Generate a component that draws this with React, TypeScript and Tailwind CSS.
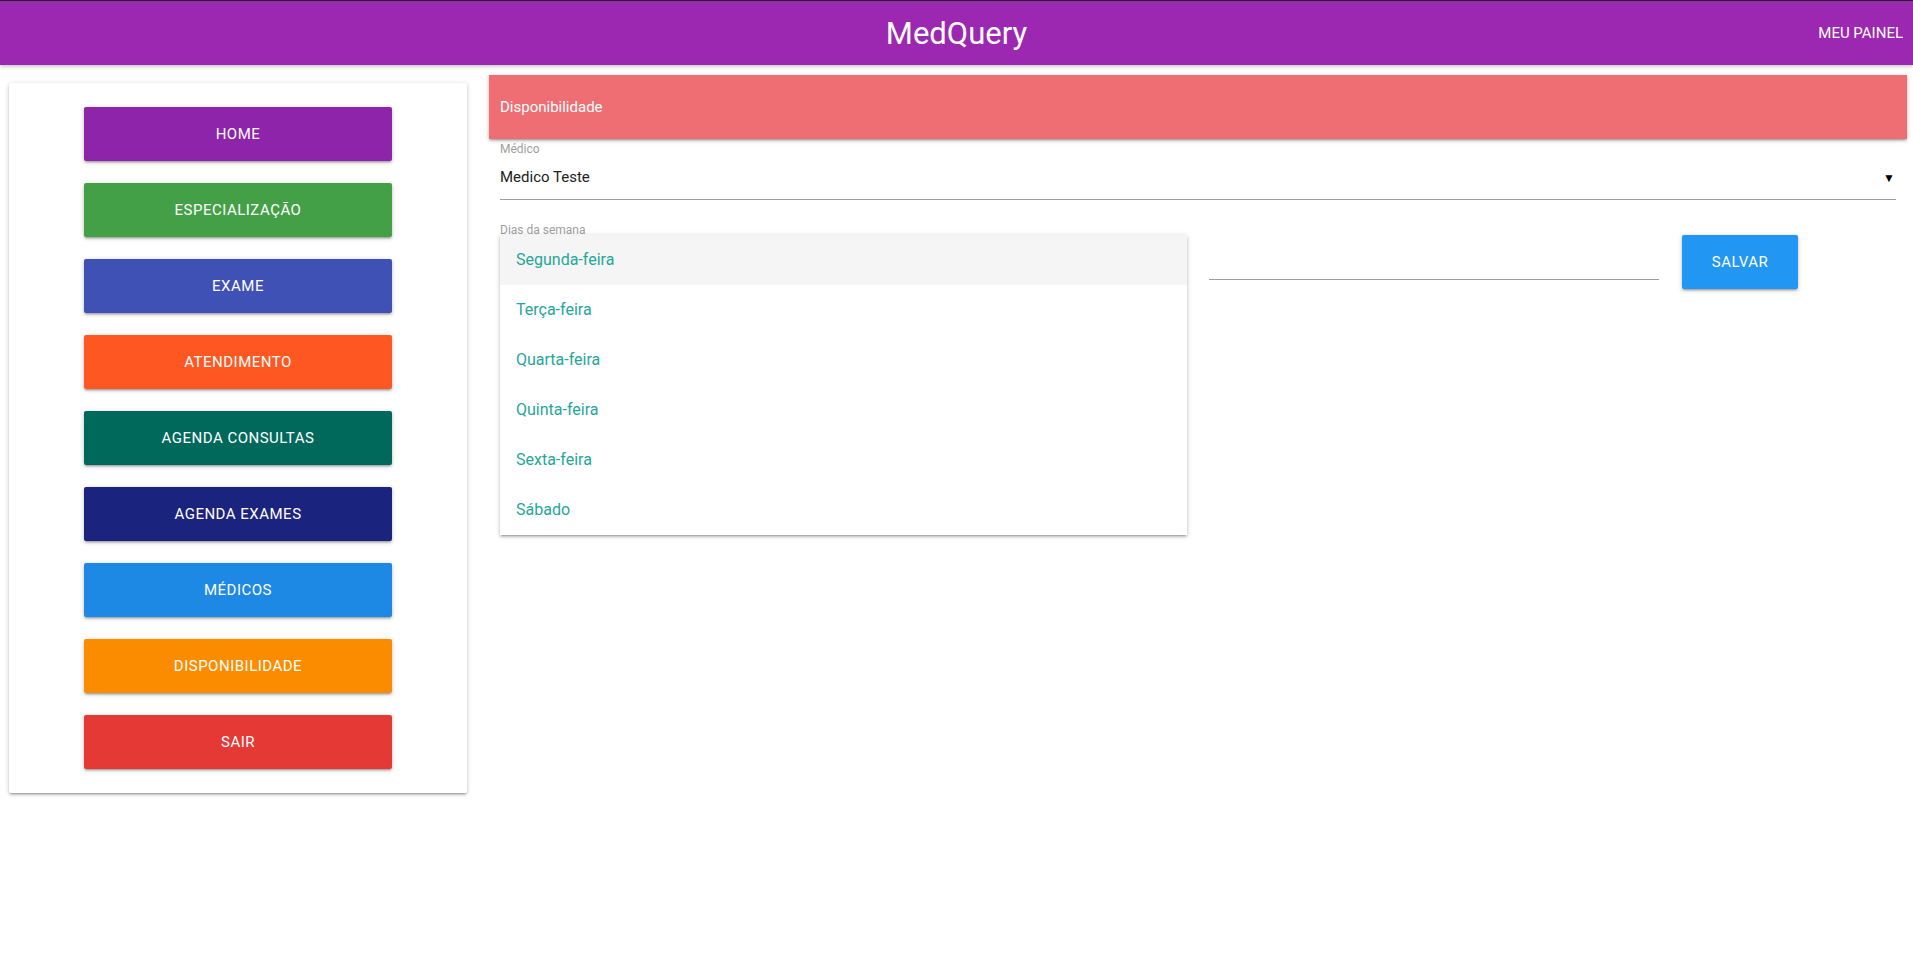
import { useState } from "react";

const shadow = "shadow-[0_2px_2px_0_rgba(0,0,0,0.14),0_3px_1px_-2px_rgba(0,0,0,0.12),0_1px_5px_0_rgba(0,0,0,0.2)]";

const menu = [
  { label: "HOME", color: "bg-[#8e24aa]" },
  { label: "ESPECIALIZAÇÃO", color: "bg-[#43a047]" },
  { label: "EXAME", color: "bg-[#3f51b5]" },
  { label: "ATENDIMENTO", color: "bg-[#ff5722]" },
  { label: "AGENDA CONSULTAS", color: "bg-[#00695c]" },
  { label: "AGENDA EXAMES", color: "bg-[#1a237e]" },
  { label: "MÉDICOS", color: "bg-[#1e88e5]" },
  { label: "DISPONIBILIDADE", color: "bg-[#fb8c00]" },
  { label: "SAIR", color: "bg-[#e53935]" },
];

const dias = ["Segunda-feira", "Terça-feira", "Quarta-feira", "Quinta-feira", "Sexta-feira", "Sábado"];

function Sidebar() {
  return (
    <aside className={`ml-[9px] mt-[18px] flex h-fit w-[458px] shrink-0 flex-col items-center gap-[22px] rounded-[2px] bg-white py-[24px] ${shadow}`}>
      {menu.map((m) => (
        <button
          key={m.label}
          className={`h-[54px] w-[308px] rounded-[2px] text-[15px] tracking-[0.5px] text-white ${m.color} ${shadow}`}
        >
          {m.label}
        </button>
      ))}
    </aside>
  );
}

function Disponibilidade() {
  const [open] = useState(true);

  return (
    <main className="ml-[22px] mt-[10px] w-[1418px]">
      {/* Page title bar */}
      <div className={`flex h-[64px] items-center bg-[#ef6e73] pl-[11px] text-[15px] text-white ${shadow}`}>
        Disponibilidade
      </div>

      <div className="px-[11px]">
        {/* Médico select */}
        <div className="mt-[4px]">
          <label className="block h-[13px] text-[12px] leading-[13px] text-[#9e9e9e]">Médico</label>
          <div className="flex h-[44px] items-center justify-between border-b border-[#9e9e9e] text-[15px] text-[#212121]">
            <span>Medico Teste</span>
            <span className="mr-[1px] text-[12px] text-black">▼</span>
          </div>
        </div>

        {/* Dias + horário + salvar */}
        <div className="mt-[24px] flex items-start">
          <div className="relative w-[687px]">
            <label className="block h-[13px] text-[12px] leading-[13px] text-[#9e9e9e]">Dias da semana</label>
            <div className="h-[44px] border-b border-[#9e9e9e]" />
            {open && (
              <ul className={`absolute left-0 top-[11px] z-10 w-[687px] bg-white ${shadow}`}>
                {dias.map((d, i) => (
                  <li
                    key={d}
                    className={`flex h-[50px] items-center px-[16px] text-[16px] text-[#26a69a] ${i === 0 ? "bg-[#f5f5f5]" : ""}`}
                  >
                    {d}
                  </li>
                ))}
              </ul>
            )}
          </div>

          <div className="ml-[22px] mt-[13px] h-[43px] w-[450px] border-b border-[#9e9e9e]" />

          <button className={`ml-[23px] mt-[11px] h-[54px] w-[116px] rounded-[2px] bg-[#2196f3] text-[15px] tracking-[0.5px] text-white ${shadow}`}>
            SALVAR
          </button>
        </div>
      </div>
    </main>
  );
}

export default function App() {
  return (
    <div className="min-h-screen bg-white font-['Roboto',sans-serif]">
      <header className="grid h-[65px] grid-cols-[1fr_auto_1fr] items-center border-t border-[#222] bg-[#9c27b0] text-white shadow-[0_2px_3px_0_rgba(0,0,0,0.2)]">
        <div />
        <h1 className="text-[31px] leading-none">MedQuery</h1>
        <a className="justify-self-end pr-[10px] text-[15px]">MEU PAINEL</a>
      </header>

      <div className="flex items-start">
        <Sidebar />
        <Disponibilidade />
      </div>
    </div>
  );
}
